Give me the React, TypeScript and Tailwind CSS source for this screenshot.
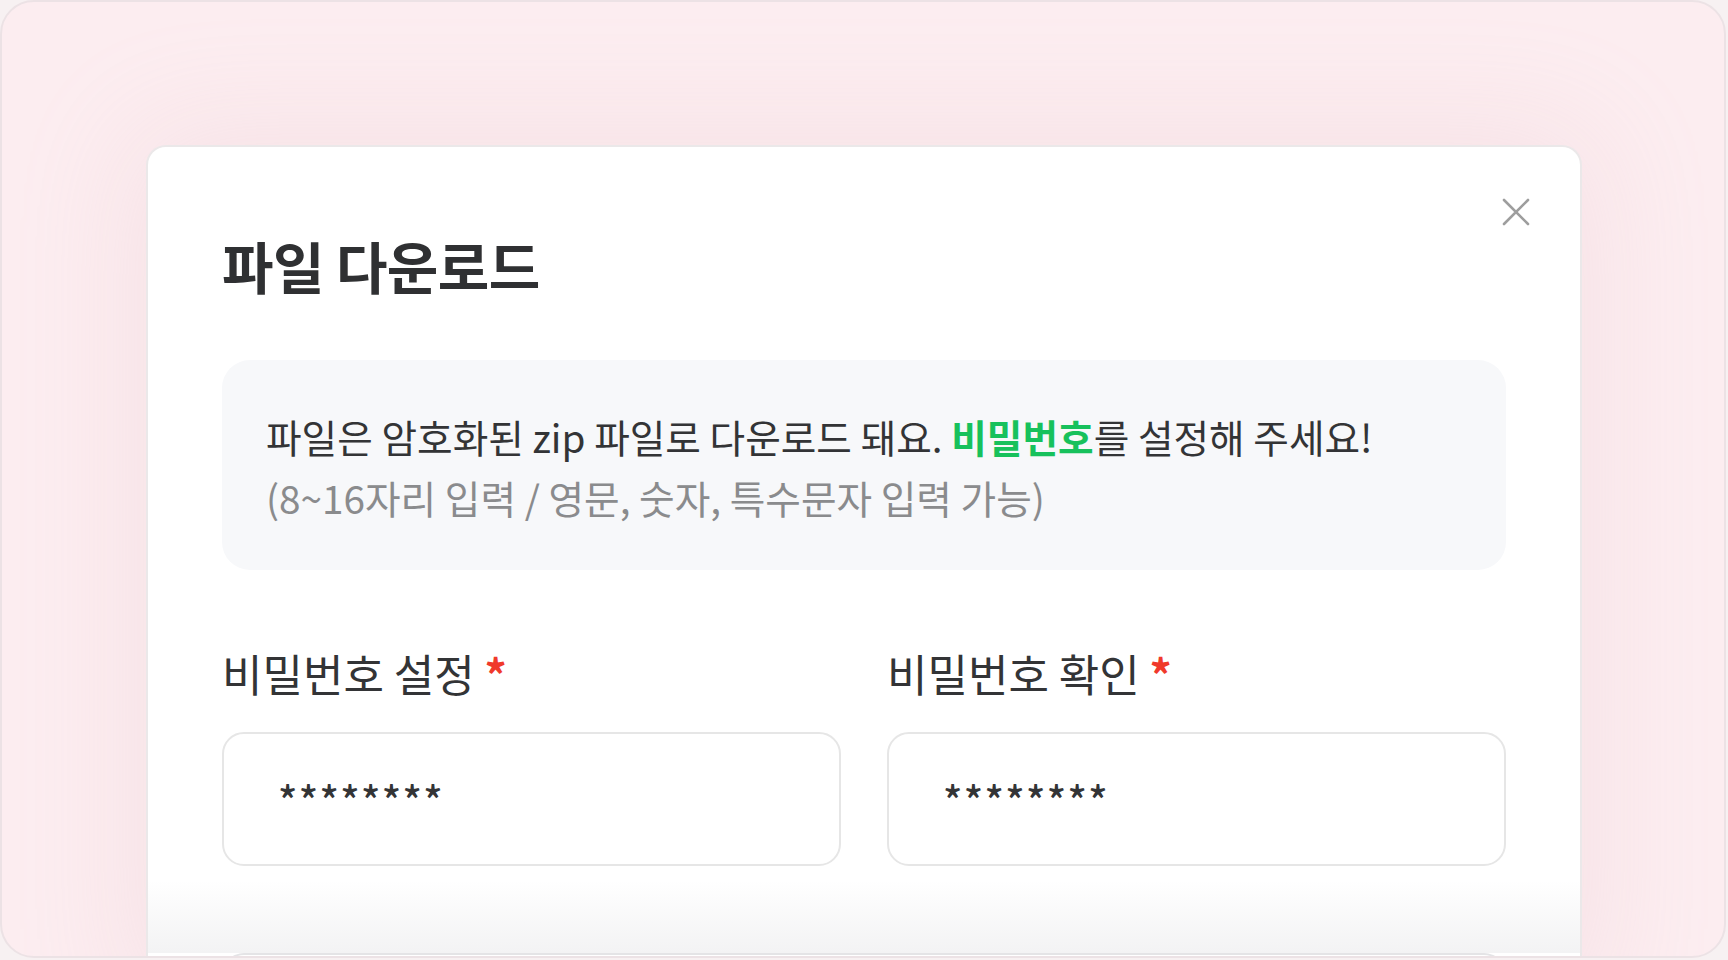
import React from "react";

function CloseIcon() {
  return (
    <svg width="28" height="28" viewBox="0 0 28 28" fill="none">
      <path d="M2 2L26 26M26 2L2 26" stroke="#9e9e9e" strokeWidth="2.6" strokeLinecap="round" />
    </svg>
  );
}

function Field({ label }: { label: string }) {
  return (
    <div className="flex flex-col">
      <div className="text-[44px] leading-[56px] text-[#333436]">
        {label} <span className="font-bold text-[#f0392b]">*</span>
      </div>
      <div className="mt-[31px] flex h-[134px] items-center rounded-[22px] border-2 border-[#e6e6e6] bg-white pl-[54px]">
        <span className="text-[40px] font-medium tracking-[1.4px] text-[#333436]">********</span>
      </div>
    </div>
  );
}

export default function App() {
  return (
    <div className="h-[960px] w-full overflow-hidden bg-[#f7f1f2] font-['Noto_Sans_CJK_KR',sans-serif]">
      <div className="h-[958px] w-[1726px] overflow-hidden rounded-[34px] border-2 border-[#ece2e5] bg-[#fcedf0] pl-[144px] pr-[142px] pt-[143px]">
        <div className="relative rounded-t-[20px] border-2 border-b-0 border-[#ebe8e9] bg-white px-[74px] pt-[86px] shadow-[0_0_120px_10px_rgba(226,180,192,0.2)]">
          <button className="absolute right-[50px] top-[51px] p-0">
            <CloseIcon />
          </button>
          <h1 className="text-[56px] font-bold leading-[64px] tracking-[-0.6px] text-[#2f3032]">
            파일 다운로드
          </h1>

          <div className="mt-[63px] rounded-[28px] bg-[#f7f8fa] px-[44px] pb-[42px] pt-[46px]">
            <p className="text-[38.7px] leading-[61px] text-[#333436]">
              파일은 암호화된 zip 파일로 다운로드 돼요.{" "}
              <span className="font-bold text-[#17c15c]">비밀번호</span>를 설정해 주세요!
            </p>
            <p className="text-[38.7px] leading-[61px] text-[#8a8b8d]">
              (8~16자리 입력 / 영문, 숫자, 특수문자 입력 가능)
            </p>
          </div>

          <div className="mt-[75px] grid grid-cols-2 gap-[46px]">
            <Field label="비밀번호 설정" />
            <Field label="비밀번호 확인" />
          </div>

          <div className="-mx-[74px] mt-[14px] h-[73px] bg-gradient-to-b from-white to-[#f3f3f4]" />
          <div className="h-[40px] rounded-t-[22px] border-2 border-b-0 border-[#e4e4e6] bg-white" />
        </div>
      </div>
    </div>
  );
}
